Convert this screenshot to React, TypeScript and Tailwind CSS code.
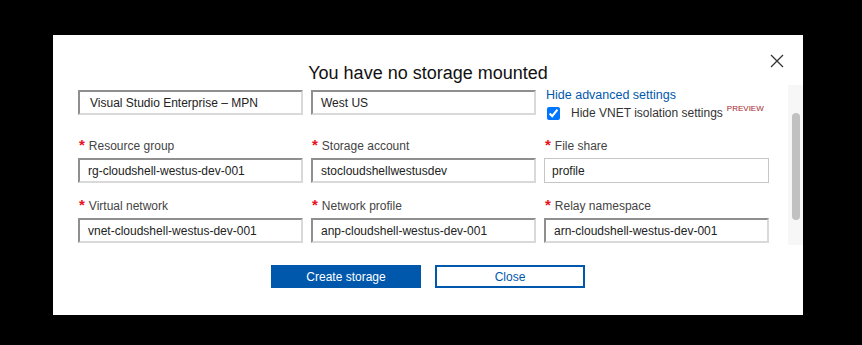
import { ReactNode } from 'react';

const inset =
  'h-[25px] border-2 border-t-[#8f8f8f] border-l-[#8f8f8f] border-r-[#d9d9d9] border-b-[#d9d9d9] bg-white pl-[8px] flex items-center text-[12px] text-[#222]';
const flat =
  'h-[25px] border border-[#c6c6c6] bg-white pl-[7px] flex items-center text-[12px] text-[#222]';

function Label({ children }: { children: ReactNode }) {
  return (
    <div className="flex items-start h-[16px] text-[12px] text-[#444] leading-[16px]">
      <span className="text-[#e81123] text-[15px] font-bold leading-[14px] mr-[4px] ml-[1px]">*</span>
      <span>{children}</span>
    </div>
  );
}

function Field({ label, value, plain }: { label: string; value: string; plain?: boolean }) {
  return (
    <div className="flex flex-col gap-[4px]">
      <Label>{label}</Label>
      <div className={plain ? flat : inset}>{value}</div>
    </div>
  );
}

export default function App() {
  return (
    <div className="w-[862px] h-[345px] bg-black pt-[35px] pl-[53px] font-['Liberation_Sans',Arial,sans-serif]">
      <div className="w-[750px] h-[280px] bg-white relative flex flex-col">
        <button className="absolute top-[18px] right-[18px] w-[16px] h-[16px] flex items-center justify-center">
          <svg width="14" height="14" viewBox="0 0 14 14" stroke="#333" strokeWidth="1.3" fill="none">
            <path d="M1 1L13 13M13 1L1 13" />
          </svg>
        </button>

        <h1 className="text-center text-[18px] leading-[21px] text-[#111] mt-[28px]">
          You have no storage mounted
        </h1>

        <div className="flex h-[160px] mt-[1px]">
          <div className="flex-1 overflow-hidden pl-[25px] pt-[5px]">
            <div className="grid grid-cols-[225px_225px_225px] gap-x-[8px] h-[24px] items-start">
              <div className={inset + ' h-[24px] pl-[10px]'}>Visual Studio Enterprise – MPN</div>
              <div className={inset + ' h-[24px] pl-[7px]'}>West US</div>
              <div className="flex flex-col -mt-[3px] pl-[2px] whitespace-nowrap">
                <a className="text-[12.5px] leading-[16px] text-[#0058ad]">Hide advanced settings</a>
                <label className="flex items-center mt-[1px] h-[18px]">
                  <input type="checkbox" checked readOnly className="w-[13px] h-[13px] m-0 ml-[1px] accent-[#0075ff]" />
                  <span className="ml-[11px] text-[12px] text-[#333]">Hide VNET isolation settings</span>
                  <span className="ml-[4px] text-[8px] leading-[8px] text-[#a4262c] self-start mt-[1px]">PREVIEW</span>
                </label>
              </div>
            </div>

            <div className="grid grid-cols-[225px_225px_225px] gap-x-[8px] mt-[24px]">
              <Field label="Resource group" value="rg-cloudshell-westus-dev-001" />
              <Field label="Storage account" value="stocloudshellwestusdev" />
              <Field label="File share" value="profile" plain />
            </div>

            <div className="grid grid-cols-[225px_225px_225px] gap-x-[8px] mt-[15px]">
              <Field label="Virtual network" value="vnet-cloudshell-westus-dev-001" />
              <Field label="Network profile" value="anp-cloudshell-westus-dev-001" />
              <Field label="Relay namespace" value="arn-cloudshell-westus-dev-001" />
            </div>
          </div>

          <div className="w-[15px] bg-[#f7f7f7] pt-[28px] flex justify-center">
            <div className="w-[8px] h-[107px] rounded-full bg-[#c1c1c1]" />
          </div>
        </div>

        <div className="flex justify-center gap-[14px] mt-[20px]">
          <button className="w-[150px] h-[23px] bg-[#0058ad] text-white text-[12px]">Create storage</button>
          <button className="w-[150px] h-[23px] border-2 border-[#0058ad] text-[#0058ad] text-[12px]">Close</button>
        </div>
      </div>
    </div>
  );
}
